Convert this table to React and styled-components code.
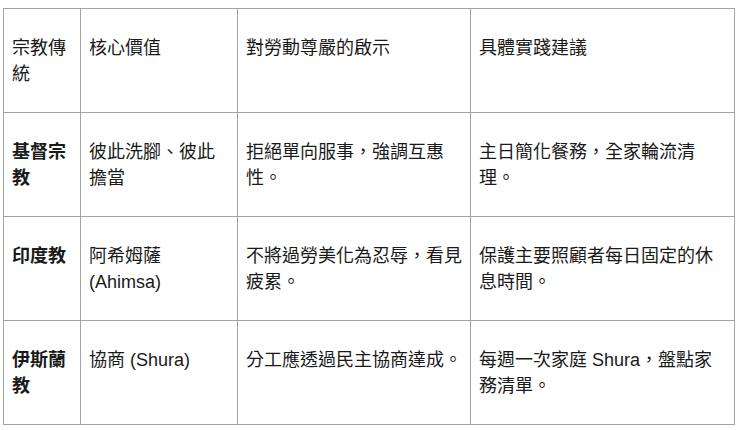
import React from 'react'
import styled, { createGlobalStyle } from 'styled-components'

const GlobalStyle = createGlobalStyle`
    body {
        margin: 0;
        padding: 8px 0 0 3px;
        background: #ffffff;
        font-family: "Liberation Sans", Arial, "Noto Sans CJK TC", sans-serif;
        color: #1a1a1a;
    }
`

const Table = styled.table`
    width: 731px;
    border-collapse: collapse;
    table-layout: fixed;
    font-size: 18px;
    line-height: 26px;
`

const Cell = styled.td`
    border: 1px solid #a3a3a3;
    padding: 8px;
    vertical-align: top;
    font-weight: ${props => props.bold ? "700" : "400"};
`

const Text = styled.p`
    margin: 17.5px 0;
`

const widths = [77, 157, 233, 264]

const rows = [
    ['宗教傳統', '核心價值', '對勞動尊嚴的啟示', '具體實踐建議'],
    ['基督宗教', '彼此洗腳、彼此擔當', '拒絕單向服事，強調互惠性。', '主日簡化餐務，全家輪流清理。'],
    ['印度教', '阿希姆薩 (Ahimsa)', '不將過勞美化為忍辱，看見疲累。', '保護主要照顧者每日固定的休息時間。'],
    ['伊斯蘭教', '協商 (Shura)', '分工應透過民主協商達成。', '每週一次家庭 Shura，盤點家務清單。'],
]

const App = () => {
    return (
        <>
            <GlobalStyle />
            <Table>
                <colgroup>
                    {widths.map((w, i) => <col key={i} style={{ width: w }} />)}
                </colgroup>
                <tbody>
                    {rows.map((row, r) => (
                        <tr key={r}>
                            {row.map((text, c) => (
                                <Cell key={c} bold={r > 0 && c === 0}>
                                    <Text>{text}</Text>
                                </Cell>
                            ))}
                        </tr>
                    ))}
                </tbody>
            </Table>
        </>
    )
}

export default App
